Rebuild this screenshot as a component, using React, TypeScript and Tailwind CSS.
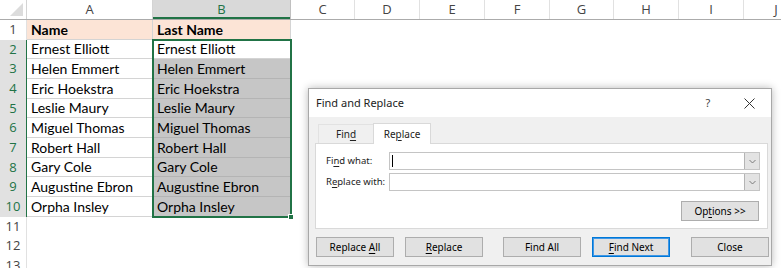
import React from "react";

// Excel sheet with the Find and Replace dialog on top

const names = [
  "Ernest Elliott",
  "Helen Emmert",
  "Eric Hoekstra",
  "Leslie Maury",
  "Miguel Thomas",
  "Robert Hall",
  "Gary Cole",
  "Augustine Ebron",
  "Orpha Insley",
];

const moreCols = [
  { l: "C", w: "w-[64px]" },
  { l: "D", w: "w-[65px]" },
  { l: "E", w: "w-[65px]" },
  { l: "F", w: "w-[65px]" },
  { l: "G", w: "w-[64px]" },
  { l: "H", w: "w-[65px]" },
  { l: "I", w: "w-[65px]" },
  { l: "J", w: "w-[65px]" },
];

function U({ children }: { children: React.ReactNode }) {
  return <span className="underline underline-offset-2">{children}</span>;
}

function Btn({ children, active, className }: { children: React.ReactNode; active?: boolean; className?: string }) {
  return (
    <div
      className={
        "h-[20px] w-[78px] flex items-center justify-center bg-[#e1e1e1] text-[10px] text-black " +
        (active ? "border border-[#0078d7] shadow-[inset_0_0_0_1px_#3f97e6] " : "border border-[#adadad] ") +
        (className ?? "")
      }
    >
      <span className="whitespace-pre">{children}</span>
    </div>
  );
}

function Combo({ caret }: { caret?: boolean }) {
  return (
    <div className="flex h-[18px] flex-1 border border-[#c4c4c4] bg-white">
      <div className="flex-1 flex items-center pl-[2px]">
        {caret && <div className="w-px h-[12px] bg-black" />}
      </div>
      <div className="w-[15px] h-full bg-[#e3e3e3] border-l border-[#b4b4b4] flex items-center justify-center">
        <svg width="7" height="5" viewBox="0 0 7 5">
          <path d="M0.5 1 L3.5 4 L6.5 1" fill="none" stroke="#707070" strokeWidth="0.9" />
        </svg>
      </div>
    </div>
  );
}

function Dialog() {
  return (
    <div
      className="absolute left-[308px] top-[88px] w-[464px] h-[178px] flex flex-col bg-[#f0f0f0] border border-[#a8a8a8] shadow-[0_0_8px_rgba(0,0,0,0.28)]"
      style={{ fontFamily: '"Noto Sans", "Open Sans", sans-serif' }}
    >
      {/* title bar */}
      <div className="h-[28px] shrink-0 bg-white flex items-center px-[7px] text-[11px] text-[#222]">
        <span className="flex-1">Find and Replace</span>
        <span className="w-[12px] text-center text-[#444] mr-[30px]">?</span>
        <svg width="11" height="11" viewBox="0 0 11 11" className="mr-[9px]">
          <path d="M0.5 0.5 L10.5 10.5 M10.5 0.5 L0.5 10.5" stroke="#333" strokeWidth="1" />
        </svg>
      </div>

      {/* tabs */}
      <div className="flex items-end h-[26px] shrink-0 pl-[9px] text-[10px] text-[#222]">
        <div className="h-[19px] w-[55px] flex items-center justify-center border-t border-l border-[#e2e2e2] bg-[#f0f0f0]">
          <span>
            Fin<U>d</U>
          </span>
        </div>
        <div className="relative z-10 -mb-px h-[21px] w-[58px] flex items-center justify-center bg-white border border-b-0 border-[#d9d9d9]">
          <span>
            Re<U>p</U>lace
          </span>
        </div>
      </div>

      {/* panel */}
      <div className="ml-[6px] mr-[3px] h-[86px] shrink-0 bg-white border border-[#d9d9d9] pl-[10px] pr-[7px] pt-[8px] text-[9.5px] text-[#222]">
        <div className="flex items-center">
          <span className="w-[63px] shrink-0 whitespace-nowrap">
            Fi<U>n</U>d what:
          </span>
          <Combo caret />
        </div>
        <div className="flex items-center mt-[3px]">
          <span className="w-[63px] shrink-0 whitespace-nowrap">
            R<U>e</U>place with:
          </span>
          <Combo />
        </div>
        <div className="flex justify-end mt-[10px] pr-[1px]">
          <Btn>
            Op<U>t</U>ions &gt;&gt;
          </Btn>
        </div>
      </div>

      {/* buttons */}
      <div className="flex mt-[8px] pl-[7px]">
        <Btn>
          Replace <U>A</U>ll
        </Btn>
        <Btn className="ml-[11px]">
          <U>R</U>eplace
        </Btn>
        <Btn className="ml-[20px]">Find All</Btn>
        <Btn active className="ml-[11px]">
          <U>F</U>ind Next
        </Btn>
        <Btn className="ml-[21px]">Close</Btn>
      </div>
    </div>
  );
}

export default function App() {
  const rows = Array.from({ length: 13 }, (_, i) => i + 1);

  return (
    <div className="relative w-[781px] h-[268px] overflow-hidden bg-white">
      {/* column headers */}
      <div
        className="flex h-[20px] border-b border-[#ababab] text-[13px] text-[#444]"
        style={{ fontFamily: '"Open Sans", "Noto Sans", sans-serif' }}
      >
        <div className="w-[27px] shrink-0 flex items-end justify-end pr-[3px] pb-[3px] border-r border-[#d4d4d4]">
          <svg width="13" height="13" viewBox="0 0 13 13">
            <path d="M13 0 L13 13 L0 13 Z" fill="#dcdcdc" />
          </svg>
        </div>
        <div className="w-[126px] shrink-0 flex items-center justify-center border-r border-[#d4d4d4]">A</div>
        <div className="w-[138px] shrink-0 flex items-center justify-center bg-[#d9d9d9] text-[#217346] border-r border-[#c0c0c0] shadow-[inset_0_-2px_0_#217346]">
          B
        </div>
        {moreCols.map((c) => (
          <div key={c.l} className={c.w + " shrink-0 flex items-center justify-center border-r border-[#e1e1e1]"}>
            {c.l}
          </div>
        ))}
      </div>

      {/* rows */}
      {rows.map((r) => {
        const sel = r >= 2 && r <= 10;
        const inTable = r <= 10;
        return (
          <div key={r} className="flex h-[19.67px]">
            <div
              className={
                "w-[27px] shrink-0 flex items-center justify-center text-[13px] " +
                (sel
                  ? "bg-[#e1e1e1] text-[#217346] border-r border-[#217346]"
                  : "text-[#444] border-r border-[#e1e1e1]")
              }
              style={{ fontFamily: '"Open Sans", "Noto Sans", sans-serif' }}
            >
              {r}
            </div>
            {inTable && (
              <>
                <div
                  className={
                    "w-[126px] shrink-0 flex items-center pl-[4px] text-[14px] text-black border-b border-r border-[#d4d4d4] " +
                    (r === 1 ? "bg-[#fce4d6] font-bold" : "bg-white")
                  }
                  style={{ fontFamily: 'Lato, "Open Sans", sans-serif' }}
                >
                  {r === 1 ? "Name" : names[r - 2]}
                </div>
                <div
                  className={
                    "w-[138px] shrink-0 flex items-center pl-[4px] text-[14px] text-black border-b border-r " +
                    (r === 1
                      ? "bg-[#fce4d6] font-bold border-[#d4d4d4]"
                      : r === 2
                        ? "bg-white border-[#d4d4d4]"
                        : "bg-[#c6c6c6] border-[#b4b4b4]")
                  }
                  style={{ fontFamily: 'Lato, "Open Sans", sans-serif' }}
                >
                  {r === 1 ? "Last Name" : names[r - 2]}
                </div>
              </>
            )}
          </div>
        );
      })}

      {/* selection outline B2:B10 */}
      <div className="absolute left-[152px] top-[39px] w-[140px] h-[179px] border-2 border-[#217346] pointer-events-none">
        <div className="absolute -right-[4px] -bottom-[4px] w-[6px] h-[6px] bg-[#217346] border border-white" />
      </div>

      <Dialog />
    </div>
  );
}
